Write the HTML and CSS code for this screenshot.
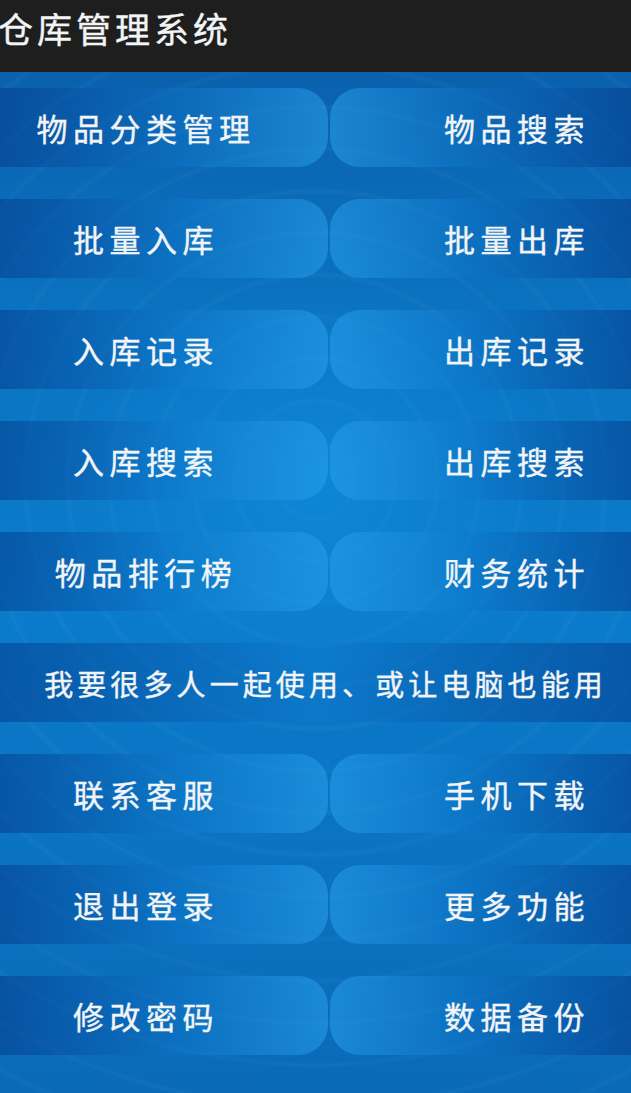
FILE: index.html
```html
<!DOCTYPE html>
<html>
<head>
<meta charset="utf-8">
<title>仓库管理系统</title>
<link rel="stylesheet" href="styles.css">
</head>
<body>
	<div class="title_bar">仓库管理系统</div>

	<div class="menu">
		<div class="row">
			<a class="btn left">物品分类管理</a>
			<a class="btn right">物品搜索</a>
		</div>
		<div class="row">
			<a class="btn left">批量入库</a>
			<a class="btn right">批量出库</a>
		</div>
		<div class="row">
			<a class="btn left">入库记录</a>
			<a class="btn right">出库记录</a>
		</div>
		<div class="row">
			<a class="btn left">入库搜索</a>
			<a class="btn right">出库搜索</a>
		</div>
		<div class="row">
			<a class="btn left">物品排行榜</a>
			<a class="btn right">财务统计</a>
		</div>
		<div class="row">
			<a class="btn wide">我要很多人一起使用、或让电脑也能用</a>
		</div>
		<div class="row">
			<a class="btn left">联系客服</a>
			<a class="btn right">手机下载</a>
		</div>
		<div class="row">
			<a class="btn left">退出登录</a>
			<a class="btn right">更多功能</a>
		</div>
		<div class="row">
			<a class="btn left">修改密码</a>
			<a class="btn right">数据备份</a>
		</div>
	</div>
</body>
</html>
```

FILE: styles.css
```css
html, body {
	margin: 0;
	padding: 0;
	height: 100%;
}
body {
	font-family: "Noto Sans CJK SC", "Noto Sans", sans-serif;
	color: #f2f4f6;
	background-color: #0a6cbc;
	background-image:
		radial-gradient(ellipse 260px 200px at 50% 44%, rgba(20, 150, 230, 0.45), rgba(20, 150, 230, 0) 100%),
		repeating-radial-gradient(circle at 50% 44%, rgba(255, 255, 255, 0) 0, rgba(255, 255, 255, 0) 34px, rgba(255, 255, 255, 0.03) 38px, rgba(255, 255, 255, 0) 42px),
		linear-gradient(to bottom, #0a5ca8 0, #0a74c2 30%, #0a7ccb 55%, #0a6ab8 100%);
	overflow: hidden;
}
.title_bar {
	height: 72px;
	background: #1e1e1e;
	font-size: 35px;
	letter-spacing: 4px;
	line-height: 56px;
	margin-left: -2px;
	white-space: nowrap;
	-webkit-text-stroke: 0.4px #f2f4f6;
}
.menu {
	padding-top: 16px;
	display: flex;
	flex-direction: column;
	gap: 32px;
}
.row {
	display: grid;
	grid-template-columns: 328px 1fr;
	column-gap: 2px;
	height: 79px;
}
.btn {
	display: flex;
	align-items: center;
	font-size: 31px;
	letter-spacing: 5.5px;
	white-space: nowrap;
	-webkit-text-stroke: 0.4px #f2f4f6;
}
.left {
	justify-content: center;
	padding-right: 36px;
	border-radius: 0 30px 30px 0;
	background: linear-gradient(to right, rgba(4, 60, 140, 0.55), rgba(16, 120, 205, 0.35) 55%, rgba(40, 160, 235, 0.55));
}
.right {
	justify-content: flex-end;
	padding-right: 41px;
	border-radius: 30px 0 0 30px;
	background: linear-gradient(to left, rgba(4, 60, 140, 0.55), rgba(16, 120, 205, 0.35) 55%, rgba(40, 160, 235, 0.55));
}
.wide {
	grid-column: 1 / 3;
	justify-content: center;
	padding-left: 20px;
	font-size: 29px;
	letter-spacing: 4.1px;
	background: linear-gradient(to right, rgba(4, 60, 140, 0.55), rgba(16, 120, 205, 0.3) 50%, rgba(4, 60, 140, 0.55));
}
```
